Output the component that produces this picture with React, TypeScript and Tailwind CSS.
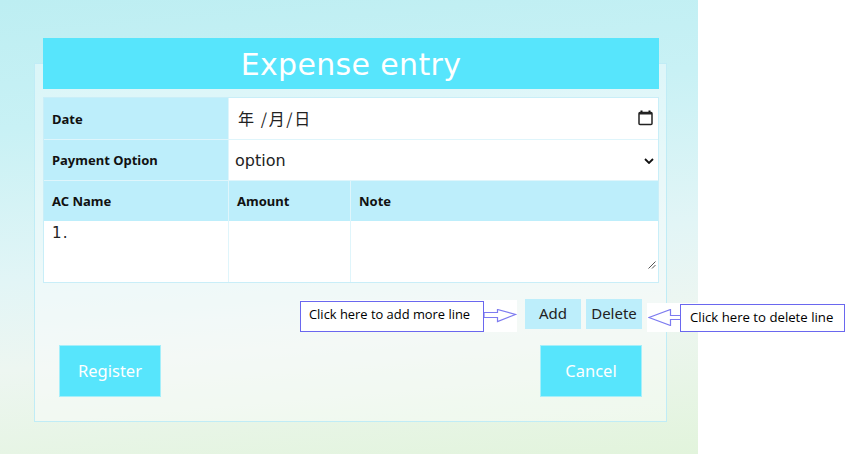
import React from "react";

const sans = "font-['Noto_Sans','DejaVu_Sans',sans-serif]";
const cell = "bg-[#bdeefb] flex items-center pl-2 pt-[2px] font-bold text-[13px] text-[#111]";

function RightArrow() {
  return (
    <svg width="33" height="14" viewBox="0 0 33 14" className="block">
      <path d="M0 3.5H13.5V0.5L31.5 5.5L13.5 12.5V8.5H0Z" fill="#fff" stroke="#7d7bf0" strokeWidth="1.2" />
    </svg>
  );
}

function LeftArrow() {
  return (
    <svg width="33" height="17" viewBox="0 0 33 17" className="block">
      <path d="M33 6.5H22.5V0.5L1 8.5L22.5 16.5V10.5H33Z" fill="#fff" stroke="#7d7bf0" strokeWidth="1.2" />
    </svg>
  );
}

function Grip() {
  return (
    <svg width="8" height="8" viewBox="0 0 8 8" className="absolute right-[2px] bottom-[13px]">
      <path d="M0.5 7.5L7.5 0.5M4 7.5L7.5 4" stroke="#555" strokeWidth="1" />
    </svg>
  );
}

export default function App() {
  return (
    <div className={`relative w-[845px] h-[454px] bg-white overflow-hidden ${sans}`}>
      <div className="w-[698px] h-[454px] pt-[63px] pl-[34px] bg-[linear-gradient(175deg,#bdeef2_0%,#c8f1f5_25%,#e2f5f6_55%,#edf6f1_72%,#e2f4dc_100%)]">
        <div className="w-[633px] h-[359px] border border-[#c0ecf6] bg-white/40 pl-[8px]">
          <div className="w-[616px] h-[51px] -mt-[26px] pt-[1px] bg-[#57e5fc] flex items-center justify-center text-white text-[30px] font-['DejaVu_Sans',sans-serif] tracking-[0.35px]">
            Expense entry
          </div>
          <div className="w-[616px] h-[186px] mt-[8px] bg-[#dff5fb] border border-[#c9eef8] grid grid-cols-[184px_1fr] grid-rows-[41px_40px_40px_1fr] gap-[1px]">
            <div className={cell}>Date</div>
            <div className="bg-white flex items-center justify-between pl-[9px] pr-[5px] text-[16px] tracking-[1.6px] text-[#222] font-['Noto_Sans_CJK_JP','DejaVu_Sans',sans-serif]">
              <span className="whitespace-pre -mt-[2px]">年 /月/日</span>
              <svg width="15" height="16" viewBox="0 0 15 16" className="-mt-[1px]">
                <path d="M3.5 0.5v2M11.5 0.5v2" stroke="#111" strokeWidth="2" />
                <rect x="1" y="2.5" width="13" height="12" rx="1" fill="none" stroke="#222" strokeWidth="1.5" />
                <path d="M1 3.5h13" stroke="#222" strokeWidth="2" />
              </svg>
            </div>
            <div className={cell}>Payment Option</div>
            <div className="bg-white flex items-center justify-between pl-[6px] pr-[4px] pt-[2px] text-[16px] text-[#222] font-['DejaVu_Sans',sans-serif]">
              <span>option</span>
              <svg width="10" height="6" viewBox="0 0 10 6">
                <path d="M1 1l4 4 4-4" fill="none" stroke="#111" strokeWidth="1.8" />
              </svg>
            </div>
            <div className="col-span-2 row-span-2 grid grid-cols-[184px_121px_1fr] grid-rows-[40px_1fr] gap-x-[1px]">
              <div className={cell}>AC Name</div>
              <div className={cell}>Amount</div>
              <div className={cell}>Note</div>
              <div className="bg-white pl-[8px] pt-[1px] text-[15px] leading-[22px] tracking-[-1.8px] text-[#222] font-['DejaVu_Sans',sans-serif]">1 .</div>
              <div className="bg-white" />
              <div className="bg-white relative"><Grip /></div>
            </div>
          </div>
          <div className="flex justify-end gap-[5px] mt-[16px] pr-[24px] text-[15px] text-[#222] font-['Noto_Sans',sans-serif]">
            <div className="w-[56px] h-[30px] pb-[1px] bg-[#bdeefb] flex items-center justify-center">Add</div>
            <div className="w-[56px] h-[30px] pb-[1px] bg-[#bdeefb] flex items-center justify-center">Delete</div>
          </div>
          <div className="flex justify-between mt-[16px] pl-[16px] pr-[24px] text-white text-[16.5px]">
            <div className="w-[102px] h-[52px] bg-[#57e5fc] border border-[#a5effa] flex items-center justify-center">Register</div>
            <div className="w-[102px] h-[52px] bg-[#57e5fc] border border-[#a5effa] flex items-center justify-center">Cancel</div>
          </div>
        </div>
      </div>

      <div className="absolute left-[300px] top-[300px] w-[217px] h-[32px] bg-white flex items-center font-['Open_Sans',sans-serif]">
        <div className="w-[184px] h-[31px] mt-[1px] border border-[#6a67ef] flex items-center pl-[8px] pb-[3px] text-[12.9px] text-black whitespace-nowrap">Click here to add more line</div>
        <div className="-mt-[1px]"><RightArrow /></div>
      </div>
      <div className="absolute left-[647px] top-[303px] w-[198px] h-[29px] bg-white flex items-center font-['Open_Sans',sans-serif]">
        <div className="ml-[1px] w-[32px] shrink-0 overflow-hidden"><LeftArrow /></div>
        <div className="w-[165px] h-[28px] border border-[#6a67ef] flex items-center pl-[9px] text-[13.2px] text-black whitespace-nowrap">Click here to delete line</div>
      </div>
    </div>
  );
}
